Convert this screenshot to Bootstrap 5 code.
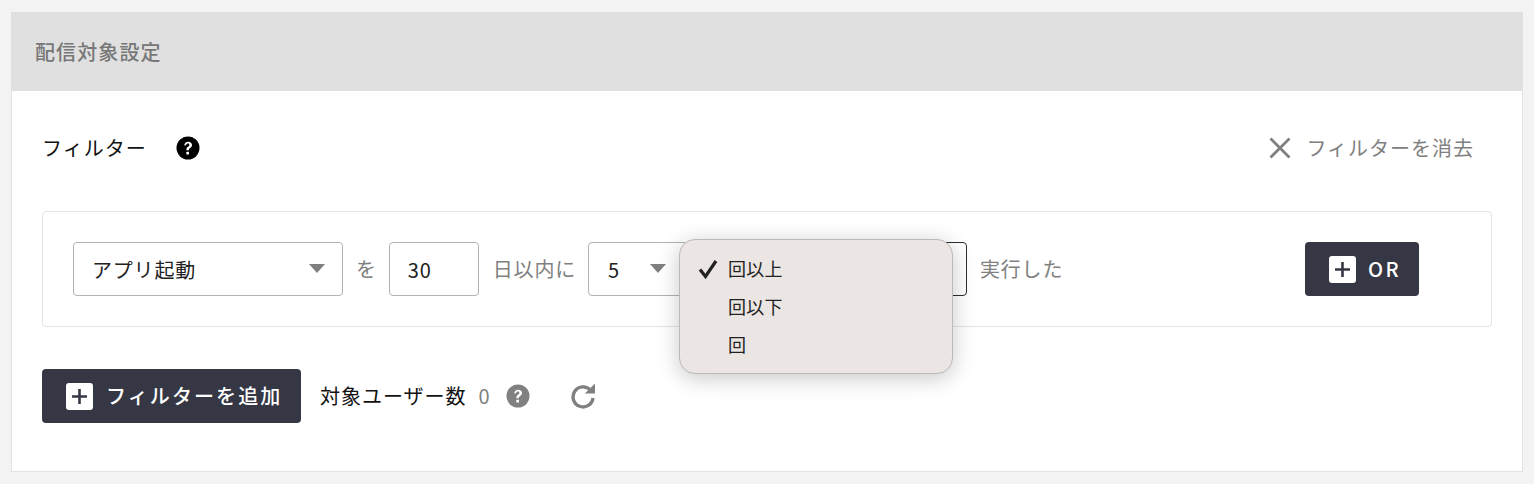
<!DOCTYPE html>
<html lang="ja">
<head>
<meta charset="utf-8">
<title>配信対象設定</title>
<link href="https://cdn.jsdelivr.net/npm/bootstrap@5.3.0/dist/css/bootstrap.min.css" rel="stylesheet">
<style>
html,body{height:100%;}
body{background:#f3f3f3;font-family:"Noto Sans CJK JP","Noto Sans",sans-serif;font-size:18px;color:#111;overflow:hidden;padding:12px 11px;}
.panel-box{background:#fff;border:1px solid #e2e2e2;border-top:0;height:460px;}
.panel-head{background:#e0e0e0;height:79px;padding:0 24px;color:#777;font-size:20px;font-weight:500;letter-spacing:1.1px;margin:0 -1px;}
.panel-body{padding:0 30px;}
.title-row{height:114px;margin-bottom:6px;}
.title-txt{font-size:20px;letter-spacing:1.05px;line-height:1;color:#111;}
.title-help{margin-left:29px;}
.clear-btn{color:#808080;font-size:20px;letter-spacing:1px;margin-right:18px;gap:14px;}
.filter-box{border:1px solid #e3e3e3;border-radius:4px;height:116px;padding:0 72px 0 30px;position:relative;}
.ctl{height:54px;border:1px solid #b2b2b2;border-radius:4px;background:#fff;font-size:20px;letter-spacing:.8px;color:#222;padding:1px 19px 0;flex:none;}
.ctl-a{width:270px;padding:1px 18px 0;}
.ctl-n{width:90px;padding-left:18px;}
.ctl-b{width:100px;}
.ctl-b .caret-tri{margin-right:0;margin-left:30px;}
.ctl-c{width:275px;border-color:#2c2c33;margin-left:4px;}
.caret-tri{width:0;height:0;border-left:8px solid transparent;border-right:8px solid transparent;border-top:9px solid #808080;margin-right:-1px;margin-top:-2px;}
.lbl{color:#808080;font-size:20px;letter-spacing:.8px;white-space:nowrap;}
.lbl-wo{margin:0 12px 0 13px;}
.lbl-in{margin:0 12px 0 14px;}
.lbl-ex{margin:0 0 0 13px;}
.dark-btn{background:#353744;color:#fff;border:0;border-radius:4px;height:54px;font-weight:500;font-size:20px;padding:0 0 0 24px;}
.dark-btn:hover{background:#353744;color:#fff;}
.or-btn{width:114px;letter-spacing:2.5px;gap:12px;}
.add-btn{width:259px;letter-spacing:2.1px;gap:13px;}
.plus-ic{width:27px;height:27px;flex:none;}
.float-menu{position:absolute;left:636px;top:27px;width:274px;height:135px;background:#ebe6e3;border:1px solid #bdb9b7;border-radius:16px;box-shadow:0 4px 22px rgba(0,0,0,.22);font-size:18px;color:#222;padding:9px 0 0;}
.float-item{height:38px;padding-left:48px;position:relative;letter-spacing:.2px;}
.check-ic{position:absolute;left:17px;top:10px;width:22px;height:20px;}
.foot-row{margin-top:42px;}
.count-lbl{font-size:20px;margin-left:19px;color:#111;letter-spacing:1px;white-space:nowrap;}
.count-num{color:#808080;font-size:20px;margin-left:12px;}
.count-help{margin-left:16px;}
.reload-ic{margin-left:40px;}
</style>
</head>
<body>
<div class="panel-box">
  <div class="panel-head d-flex align-items-center">配信対象設定</div>
  <div class="panel-body">
    <div class="title-row d-flex align-items-center justify-content-between">
      <div class="d-flex align-items-center">
        <span class="title-txt">フィルター</span>
        <svg class="title-help" width="24" height="24" viewBox="0 0 24 24"><circle cx="12" cy="12" r="11.5" fill="#000"/><path d="M8.3 9.4c.1-2.3 1.7-3.7 3.9-3.7 2.2 0 3.8 1.3 3.8 3.2 0 1.5-.8 2.3-1.9 3-.9.6-1.2 1-1.2 1.9v.4h-2.5v-.7c0-1.3.5-2 1.6-2.8.9-.6 1.4-1 1.4-1.8 0-.8-.7-1.3-1.6-1.3-1 0-1.6.6-1.7 1.6z" fill="#fff"/><rect x="10.4" y="15.8" width="2.6" height="2.6" rx=".5" fill="#fff"/></svg>
      </div>
      <div class="clear-btn d-flex align-items-center">
        <svg width="24" height="24" viewBox="0 0 24 24"><path d="M2.5 2.5l19 19M21.5 2.5l-19 19" stroke="#808080" stroke-width="2.8" fill="none"/></svg>
        <span>フィルターを消去</span>
      </div>
    </div>
    <div class="filter-box d-flex align-items-center">
      <div class="ctl ctl-a d-flex align-items-center justify-content-between"><span>アプリ起動</span><i class="caret-tri"></i></div>
      <span class="lbl lbl-wo">を</span>
      <div class="ctl ctl-n d-flex align-items-center">30</div>
      <span class="lbl lbl-in">日以内に</span>
      <div class="ctl ctl-b d-flex align-items-center"><span>5</span><i class="caret-tri"></i></div>
      <div class="ctl ctl-c"></div>
      <span class="lbl lbl-ex">実行した</span>
      <button type="button" class="btn dark-btn or-btn ms-auto d-flex align-items-center">
        <svg class="plus-ic" viewBox="0 0 27 27"><rect width="27" height="27" rx="3" fill="#fff"/><path d="M13.5 6v15M6 13.5h15" stroke="#353744" stroke-width="2.6"/></svg>
        <span>OR</span>
      </button>
      <div class="float-menu">
        <div class="float-item d-flex align-items-center">
          <svg class="check-ic" viewBox="0 0 22 20"><path d="M3 10.5l5.5 7L19 2" stroke="#222" stroke-width="3.2" fill="none"/></svg>回以上</div>
        <div class="float-item d-flex align-items-center">回以下</div>
        <div class="float-item d-flex align-items-center">回</div>
      </div>
    </div>
    <div class="foot-row d-flex align-items-center">
      <button type="button" class="btn dark-btn add-btn d-flex align-items-center">
        <svg class="plus-ic" viewBox="0 0 27 27"><rect width="27" height="27" rx="3" fill="#fff"/><path d="M13.5 6v15M6 13.5h15" stroke="#353744" stroke-width="2.6"/></svg>
        <span>フィルターを追加</span>
      </button>
      <span class="count-lbl">対象ユーザー数</span>
      <span class="count-num">0</span>
      <svg class="count-help" width="24" height="24" viewBox="0 0 24 24"><circle cx="12" cy="12" r="11.5" fill="#808080"/><path d="M8.3 9.4c.1-2.3 1.7-3.7 3.9-3.7 2.2 0 3.8 1.3 3.8 3.2 0 1.5-.8 2.3-1.9 3-.9.6-1.2 1-1.2 1.9v.4h-2.5v-.7c0-1.3.5-2 1.6-2.8.9-.6 1.4-1 1.4-1.8 0-.8-.7-1.3-1.6-1.3-1 0-1.6.6-1.7 1.6z" fill="#fff"/><rect x="10.4" y="15.8" width="2.6" height="2.6" rx=".5" fill="#fff"/></svg>
      <svg class="reload-ic" width="26" height="26" viewBox="0 0 26 26"><path d="M20.5 7.2A10 10 0 1 0 23 15" stroke="#808080" stroke-width="3.4" fill="none"/><path d="M14.8 10.5L25 10.5 25 .5z" fill="#808080"/></svg>
    </div>
  </div>
</div>
<script src="https://cdn.jsdelivr.net/npm/bootstrap@5.3.0/dist/js/bootstrap.bundle.min.js"></script>
</body>
</html>
